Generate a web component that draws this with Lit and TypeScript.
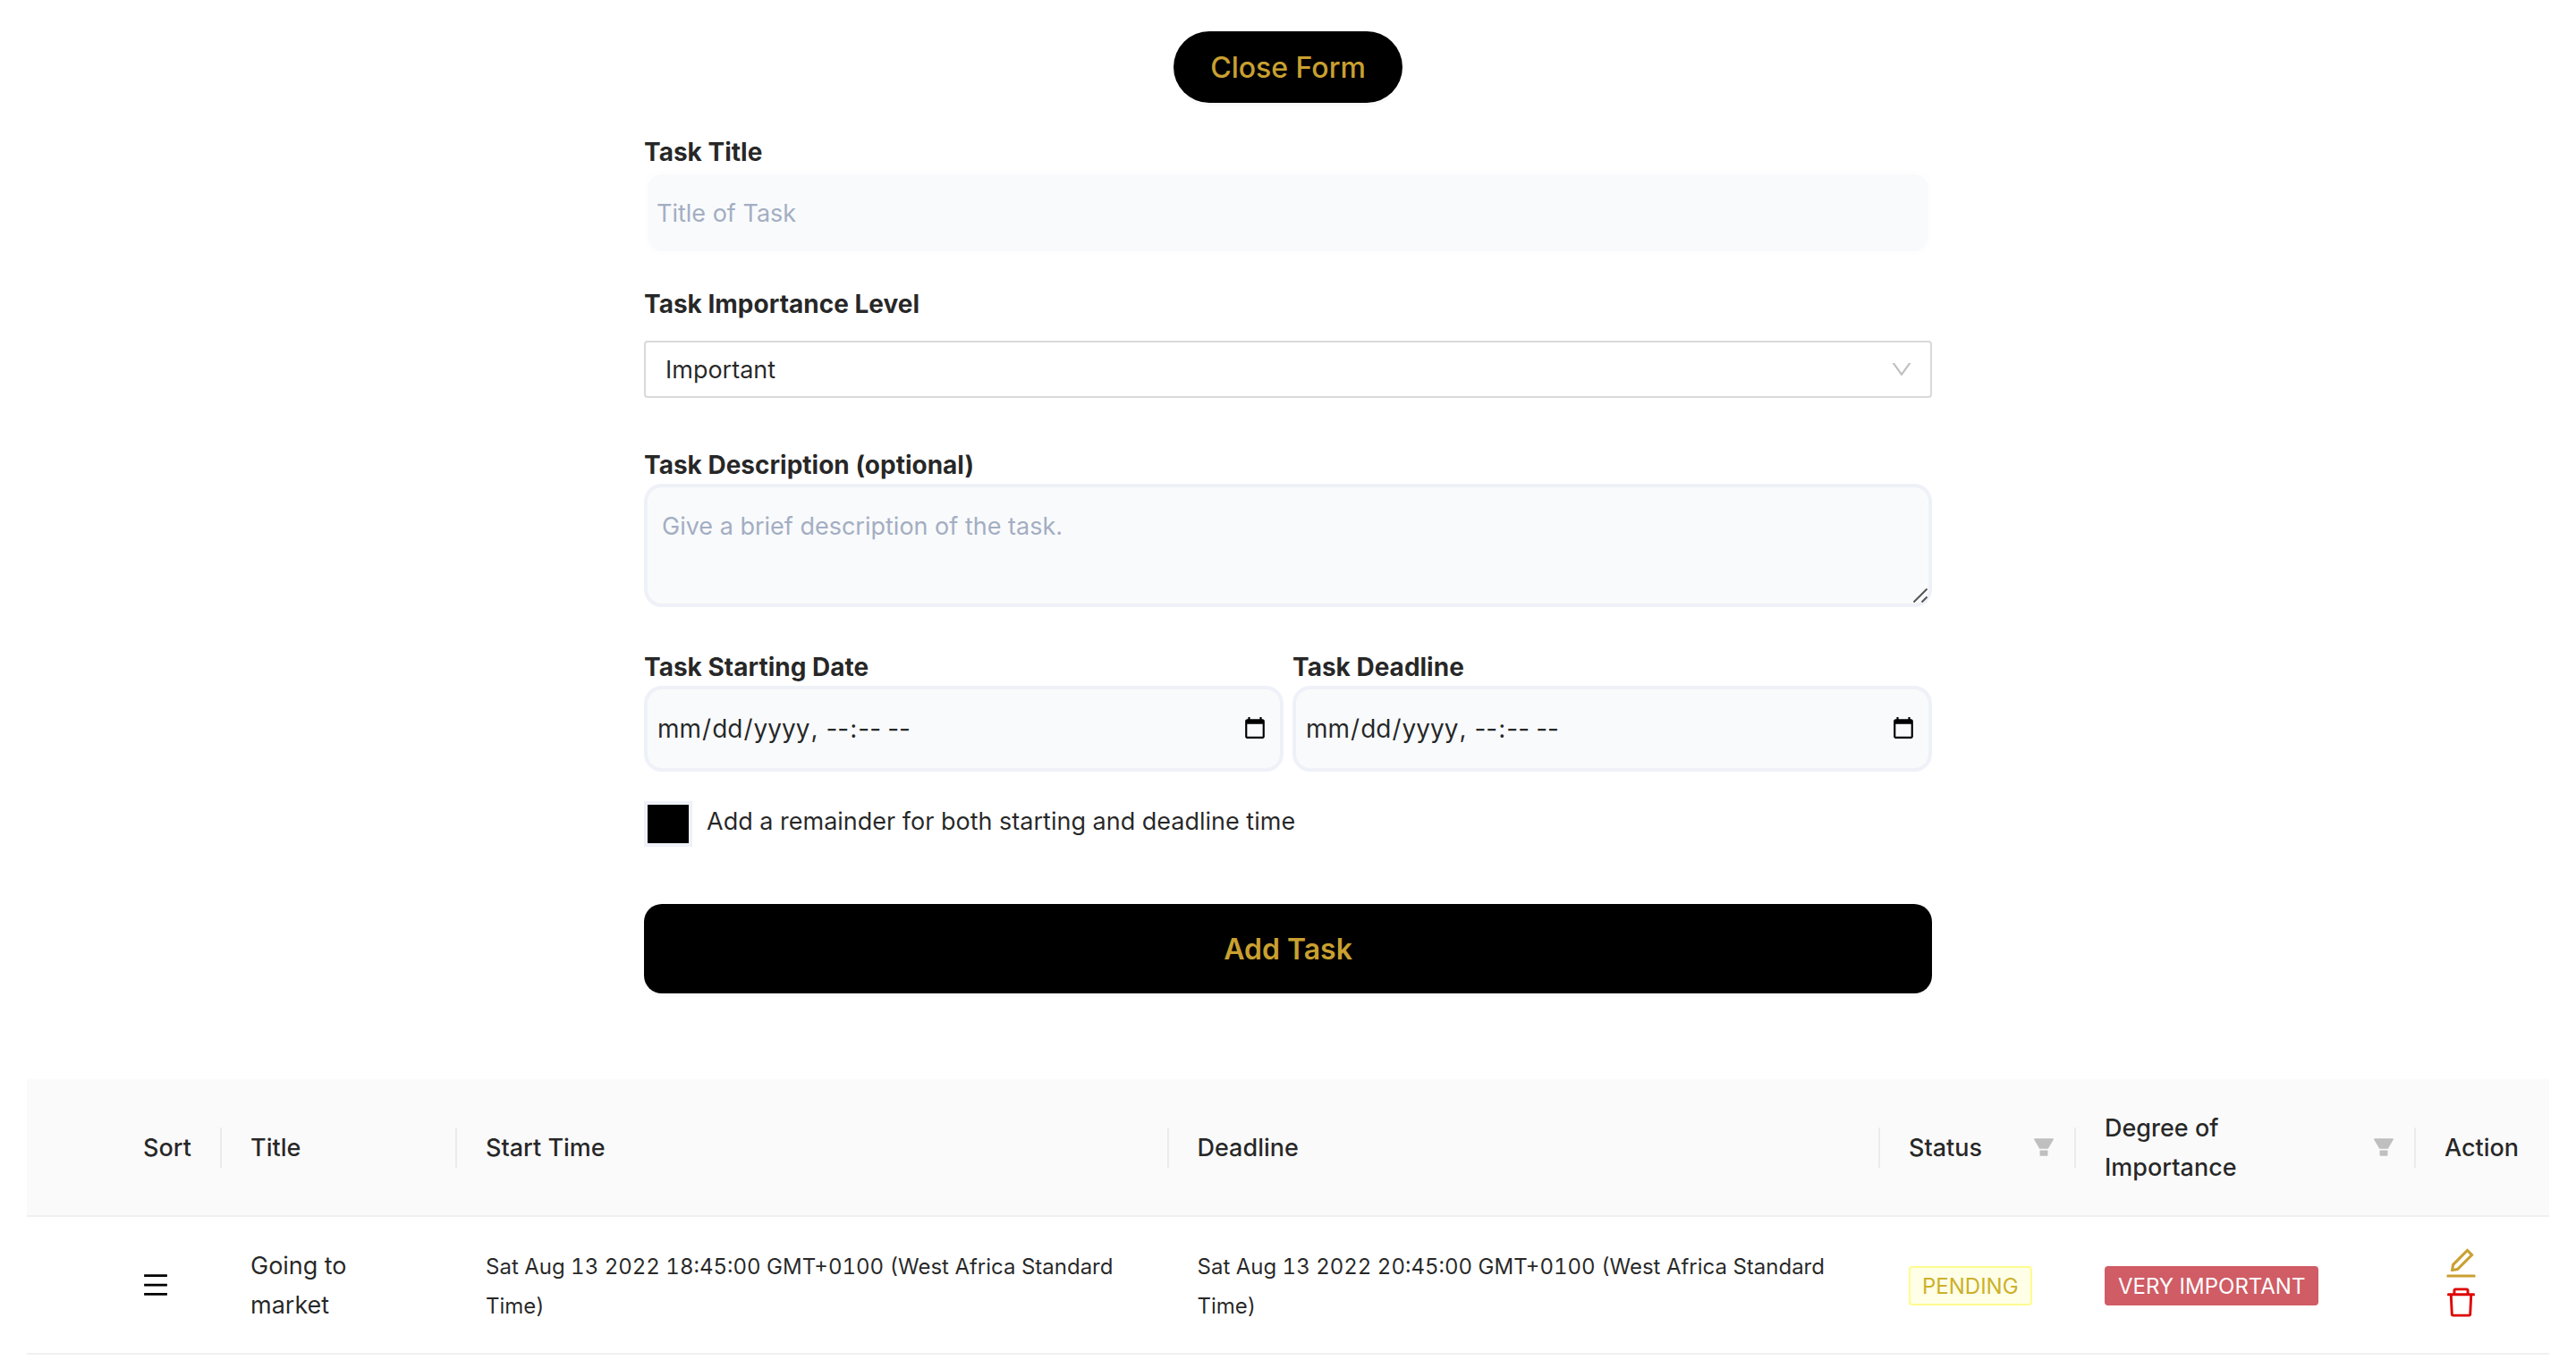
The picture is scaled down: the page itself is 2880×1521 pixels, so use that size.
import { LitElement, html, css, svg } from "lit";
import { customElement, state } from "lit/decorators.js";

interface Task {
  title: string;
  start: string;
  deadline: string;
  status: string;
  importance: string;
}

const icon = (path: string, cls: string) => html`
  <svg class="icon ${cls}" viewBox="0 0 1024 1024" fill="currentColor" aria-hidden="true">
    ${svg`<path d=${path}></path>`}
  </svg>
`;

const DOWN =
  "M884 256h-75c-5.1 0-9.900 2.500-12.900 6.600L512 654.200 227.900 262.600c-3-4.100-7.800-6.600-12.900-6.600h-75c-6.500 0-10.300 7.400-6.500 12.700l352.600 486.100c12.800 17.600 39 17.600 51.700 0l352.600-486.100c3.900-5.300.1-12.700-6.400-12.700z";
const FILTER =
  "M349 838c0 17.700 14.200 32 31.800 32h262.400c17.600 0 31.800-14.300 31.800-32V642H349v196zm531.100-684H143.900c-24.500 0-39.800 26.700-27.500 48l221.300 376h348.800l221.300-376c12.100-21.300-3.200-48-27.700-48z";
const EDIT =
  "M257.7 752c2 0 4-.2 6-.5L431.900 722c2-.4 3.900-1.300 5.300-2.800l423.900-423.900a9.960 9.960 0 000-14.100L694.900 114.900c-1.900-1.900-4.400-2.900-7.100-2.900s-5.200 1-7.100 2.900L256.800 538.800c-1.500 1.500-2.400 3.300-2.800 5.300l-29.500 168.200a33.500 33.500 0 009.400 29.800c6.600 6.400 14.900 9.900 23.800 9.900zm67.400-174.400L687.800 215l73.300 73.300-362.700 362.600-88.900 15.700 15.600-89zM880 836H144c-17.700 0-32 14.300-32 32v36c0 4.400 3.600 8 8 8h784c4.400 0 8-3.600 8-8v-36c0-17.700-14.300-32-32-32z";
const TRASH =
  "M360 184h-8c4.400 0 8-3.600 8-8v8h304v-8c0 4.400 3.600 8 8 8h-8v72h72v-80c0-35.300-28.700-64-64-64H352c-35.300 0-64 28.700-64 64v80h72v-72zm504 72H160c-17.700 0-32 14.300-32 32v32c0 4.400 3.600 8 8 8h60.400l24.700 523c1.600 34.100 29.800 61 63.900 61h454c34.200 0 62.300-26.800 63.900-61l24.700-523H888c4.400 0 8-3.600 8-8v-32c0-17.700-14.300-32-32-32zM731.300 840H292.700l-24.200-512h487l-24.200 512z";
const MENU =
  "M100 136h824v88H100zM100 468h824v88H100zM100 800h824v88H100z";

@customElement("app-root")
export class AppRoot extends LitElement {
  @state() private open = true;

  @state() private tasks: Task[] = [
    {
      title: "Going to market",
      start: "Sat Aug 13 2022 18:45:00 GMT+0100 (West Africa Standard Time)",
      deadline: "Sat Aug 13 2022 20:45:00 GMT+0100 (West Africa Standard Time)",
      status: "PENDING",
      importance: "VERY IMPORTANT",
    },
  ];

  static styles = css`
    :host {
      display: block;
      padding: 35px 30px 0;
      background: #fff;
      color: rgba(0, 0, 0, 0.85);
      font-family: Inter, "Liberation Sans", sans-serif;
      font-size: 27px;
      line-height: 44px;
    }
    * {
      box-sizing: border-box;
    }
    button,
    input,
    select,
    textarea {
      margin: 0;
      font: inherit;
      color: inherit;
    }
    button {
      border: 0;
      cursor: pointer;
    }
    .icon {
      display: block;
      flex: none;
    }
    .toggle {
      display: block;
      height: 80px;
      margin: 0 auto 32px;
      padding: 2px 41px 0;
      border-radius: 40px;
      background: #000;
      box-shadow: 0 4px 0 rgba(0, 0, 0, 0.015);
      color: #c9a030;
      font-size: 32px;
      font-weight: 500;
    }
    .form {
      display: flex;
      flex-direction: column;
      width: 50vw;
      margin: 0 auto;
    }
    .label {
      display: block;
      height: 44px;
      padding-top: 1px;
      font-size: 28px;
      font-weight: 700;
    }
    .field {
      display: block;
      width: 100%;
      border: 4px solid #eef1f7;
      border-radius: 20px;
      background: #f9fafc;
      outline: none;
    }
    .field::placeholder {
      color: #a3aec2;
      opacity: 1;
    }
    .title {
      height: 94px;
      margin-bottom: 32px;
      padding: 0 10px;
      border-color: #fefefe;
    }
    .select-box {
      display: grid;
      align-items: center;
      margin: 20px 0 52px;
    }
    .select {
      grid-area: 1 / 1;
      width: 100%;
      height: 64px;
      padding: 2px 22px 0;
      appearance: none;
      border: 2px solid #d9d9d9;
      border-radius: 4px;
      background: #fff;
    }
    .select-box .icon {
      grid-area: 1 / 1;
      justify-self: end;
      margin-right: 20px;
      color: rgba(0, 0, 0, 0.25);
      pointer-events: none;
    }
    .s28 {
      width: 28px;
      height: 28px;
    }
    .s32 {
      width: 32px;
      height: 32px;
    }
    .s41 {
      width: 41px;
      height: 41px;
    }
    .description-box {
      display: grid;
      margin-bottom: 44px;
    }
    .description {
      grid-area: 1 / 1;
      height: 138px;
      padding: 22px 16px 0;
      resize: vertical;
    }
    .description::-webkit-resizer {
      background: transparent;
    }
    .grip {
      grid-area: 1 / 1;
      place-self: end;
      width: 16px;
      height: 16px;
      margin: 5px;
      fill: none;
      stroke: #555;
      stroke-width: 2;
      pointer-events: none;
    }
    .dates {
      display: grid;
      grid-template-columns: 1fr 1fr;
      gap: 10px;
    }
    .date {
      height: 96px;
      padding: 0 12px 0 10px;
      font-size: 28px;
    }
    .remind {
      display: flex;
      gap: 16px;
      margin: 33px 0 64px;
    }
    .remind-text {
      padding-top: 1px;
    }
    .check {
      flex: none;
      width: 54px;
      height: 51px;
      appearance: none;
      border: 4px solid #eef1f7;
      background: #000;
    }
    .submit {
      height: 100px;
      padding: 2px 0 0;
      border-radius: 20px;
      background: #000;
      box-shadow: 0 4px 0 rgba(0, 0, 0, 0.015);
      color: #c9a030;
      font-size: 32px;
      font-weight: 600;
    }
    .table {
      width: 100%;
      margin-top: 96px;
      table-layout: fixed;
      border-collapse: separate;
      border-spacing: 0;
      font-variant-numeric: tabular-nums;
    }
    .table th,
    .table td {
      padding: 33px 32px 31px;
      border-bottom: 2px solid #f0f0f0;
      text-align: left;
      vertical-align: middle;
    }
    .table th {
      background: linear-gradient(#ebebeb, #ebebeb) right center / 2px 45px no-repeat #fafafa;
      font-weight: 500;
    }
    .table th:first-child {
      border-top-left-radius: 4px;
    }
    .table th:first-child,
    .table th:last-child {
      background: #fafafa;
    }
    .table th:last-child {
      border-top-right-radius: 4px;
    }
    .table th.filtered {
      padding-right: 22px;
    }
    .table .action {
      padding-right: 16px;
    }
    .table .sort-cell {
      padding-top: 32px;
      padding-bottom: 32px;
    }
    .table .tool-cell {
      padding-top: 28px;
      padding-bottom: 34px;
    }
    .c-gap {
      width: 98px;
    }
    .c-sort {
      width: 120px;
    }
    .c-title {
      width: 263px;
    }
    .c-status {
      width: 219px;
    }
    .c-degree {
      width: 380px;
    }
    .c-action {
      width: 149px;
    }
    .head {
      display: flex;
      align-items: center;
      justify-content: space-between;
      gap: 44px;
    }
    .plain {
      display: block;
      padding: 0;
      background: none;
    }
    .filter {
      padding-bottom: 2px;
      color: #bfbfbf;
    }
    .table .time {
      padding-top: 34px;
      padding-bottom: 30px;
      font-size: 24px;
    }
    .tag {
      display: block;
      width: max-content;
      padding: 1px 13px 0;
      border: 2px solid transparent;
      border-radius: 4px;
      font-size: 24px;
      line-height: 39px;
    }
    .pending {
      border-color: #fffb8f;
      background: #feffe6;
      color: #ccb02c;
    }
    .very {
      border-color: #d05c65;
      background: #d05c65;
      color: #fff;
    }
    .sort {
      margin-left: -2px;
      color: #000;
    }
    .tools {
      display: grid;
      gap: 3px;
      margin-left: -2px;
    }
    .edit {
      color: #c9a030;
    }
    .remove {
      color: #de0000;
    }
  `;

  private filterHead(text: string) {
    return html`<div class="head">
      <span>${text}</span>
      <button class="plain filter" type="button" aria-label="Filter">${icon(FILTER, "s28")}</button>
    </div>`;
  }

  private form() {
    return html`
      <form class="form" @submit=${(e: Event) => e.preventDefault()}>
        <label class="label" for="title">Task Title</label>
        <input class="field title" id="title" type="text" placeholder="Title of Task" />
        <label class="label" for="level">Task Importance Level</label>
        <div class="select-box">
          <select class="select" id="level">
            <option>Important</option>
            <option>Very Important</option>
          </select>
          ${icon(DOWN, "s28")}
        </div>
        <label class="label" for="description">Task Description (optional)</label>
        <div class="description-box">
          <textarea
            class="field description"
            id="description"
            placeholder="Give a brief description of the task."
          ></textarea>
          <svg class="grip" viewBox="0 0 16 16" aria-hidden="true">
            <path d="M0.500 15.500L15.500 0.500M9.500 15.500L15.500 9.500"></path>
          </svg>
        </div>
        <div class="dates">
          <div>
            <label class="label" for="start">Task Starting Date</label>
            <input class="field date" id="start" type="datetime-local" />
          </div>
          <div>
            <label class="label" for="deadline">Task Deadline</label>
            <input class="field date" id="deadline" type="datetime-local" />
          </div>
        </div>
        <div class="remind">
          <input class="check" id="remind" type="checkbox" />
          <label class="remind-text" for="remind">Add a remainder for both starting and deadline time</label>
        </div>
        <button class="submit" type="submit">Add Task</button>
      </form>
    `;
  }

  render() {
    return html`
      <button class="toggle" type="button" @click=${() => (this.open = !this.open)}>
        ${this.open ? "Close Form" : "Open Form"}
      </button>
      ${this.open ? this.form() : ""}
      <table class="table">
        <colgroup>
          <col class="c-gap" />
          <col class="c-sort" />
          <col class="c-title" />
          <col />
          <col />
          <col class="c-status" />
          <col class="c-degree" />
          <col class="c-action" />
        </colgroup>
        <thead>
          <tr>
            <th></th>
            <th>Sort</th>
            <th>Title</th>
            <th>Start Time</th>
            <th>Deadline</th>
            <th class="filtered">${this.filterHead("Status")}</th>
            <th class="filtered">${this.filterHead("Degree of Importance")}</th>
            <th class="action">Action</th>
          </tr>
        </thead>
        <tbody>
          ${this.tasks.map(
            (t) => html`<tr>
              <td></td>
              <td class="sort-cell">
                <button class="plain sort" type="button" aria-label="Drag to sort">
                  ${icon(MENU, "s32")}
                </button>
              </td>
              <td>${t.title}</td>
              <td class="time">${t.start}</td>
              <td class="time">${t.deadline}</td>
              <td><span class="tag pending">${t.status}</span></td>
              <td><span class="tag very">${t.importance}</span></td>
              <td class="tool-cell">
                <div class="tools">
                  <button class="plain edit" type="button" aria-label="Edit">${icon(EDIT, "s41")}</button>
                  <button class="plain remove" type="button" aria-label="Delete">${icon(TRASH, "s41")}</button>
                </div>
              </td>
            </tr>`,
          )}
        </tbody>
      </table>
    `;
  }
}
